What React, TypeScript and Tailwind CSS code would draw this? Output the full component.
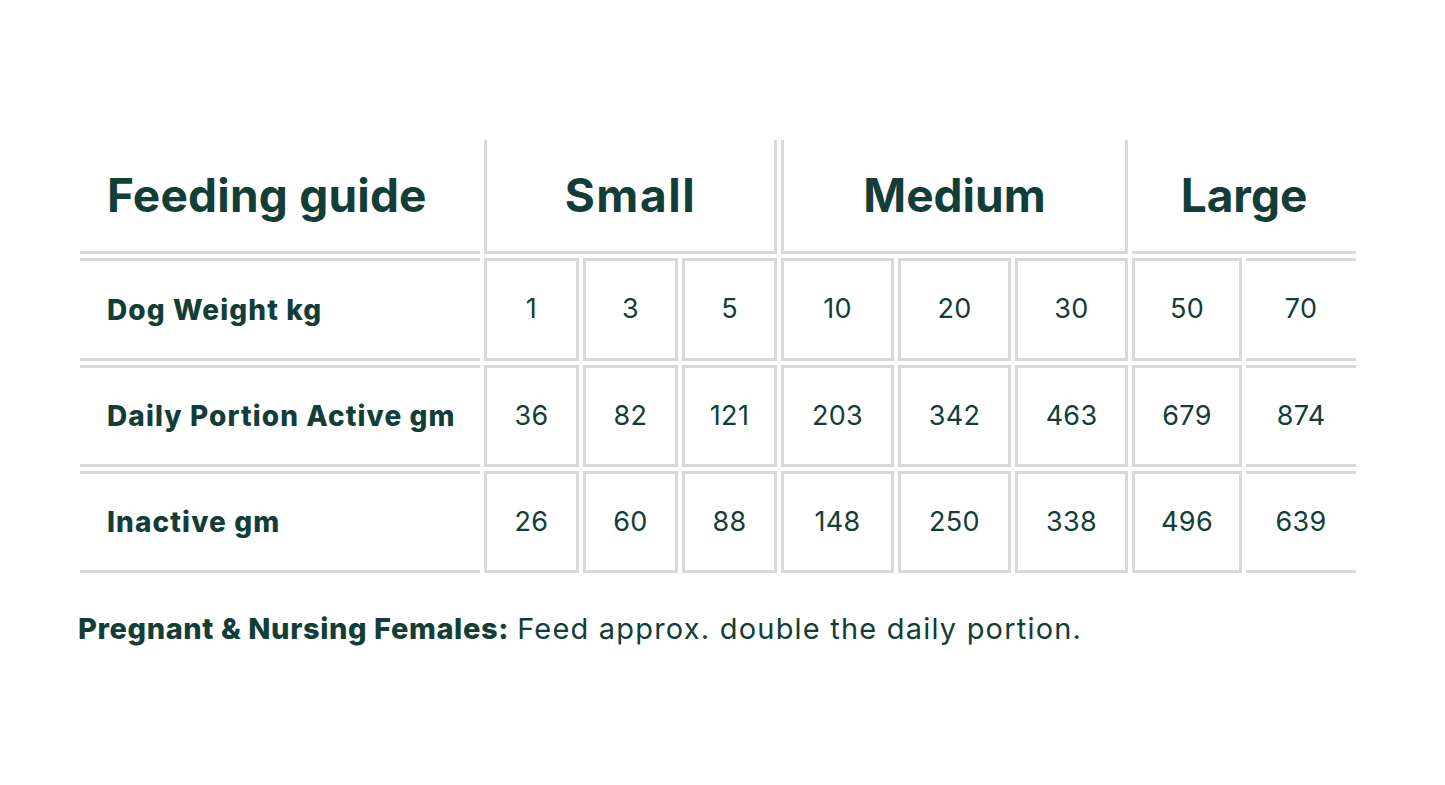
import React from "react";

const C = "text-[#123e37]";
const rows: { label: string; vals: string[] }[] = [
  { label: "Dog Weight kg", vals: ["1", "3", "5", "10", "20", "30", "50", "70"] },
  { label: "Daily Portion Active gm", vals: ["36", "82", "121", "203", "342", "463", "679", "874"] },
  { label: "Inactive gm", vals: ["26", "60", "88", "148", "250", "338", "496", "639"] },
];
const widths = ["w-[95px]", "w-[95px]", "w-[95px]", "w-[113px]", "w-[113px]", "w-[113px]", "w-[110px]", "w-[110px]"];

export default function App() {
  return (
    <div className={`w-[1445px] h-[785px] bg-white ${C}`} style={{ fontFamily: "Inter, 'Liberation Sans', sans-serif" }}>
      <div className="pl-[76px] pt-[136px]">
        <table className="border-separate border-spacing-1 table-fixed w-[1284px]">
          <colgroup>
            <col className="w-[400px]" />
            {widths.map((w, i) => (
              <col key={i} className={w} />
            ))}
          </colgroup>
          <thead>
            <tr>
              <th className="h-[114px] border-b-[3px] border-[#d9d9d9] pl-[27px] text-left text-[46px] font-bold tracking-[0.2px]">
                Feeding guide
              </th>
              <th colSpan={3} className="border-[3px] border-t-0 border-[#d9d9d9] text-center text-[46px] font-bold tracking-[1.6px]">
                Small
              </th>
              <th colSpan={3} className="border-[3px] border-t-0 border-[#d9d9d9] text-center text-[46px] font-bold">
                Medium
              </th>
              <th colSpan={2} className="border-b-[3px] border-[#d9d9d9] text-center text-[46px] font-bold">
                Large
              </th>
            </tr>
          </thead>
          <tbody>
            {rows.map((r, ri) => (
              <tr key={r.label}>
                <td
                  className={
                    ri === 0
                      ? "h-[103px] border-y-[3px] border-[#d9d9d9] pl-[27px] text-left text-[28px] font-extrabold tracking-[1.1px]"
                      : "h-[102px] border-y-[3px] border-[#d9d9d9] pl-[27px] text-left text-[28px] font-extrabold tracking-[1.1px]"
                  }
                >
                  {r.label}
                </td>
                {r.vals.map((v, i) => (
                  <td
                    key={i}
                    className={
                      i === 7
                        ? "border-y-[3px] border-[#d9d9d9] text-center text-[27px] tracking-[0.3px]"
                        : "border-[3px] border-[#d9d9d9] text-center text-[27px] tracking-[0.3px]"
                    }
                  >
                    {v}
                  </td>
                ))}
              </tr>
            ))}
          </tbody>
        </table>
        <p className="mt-[33px] ml-[2px] text-[29px] leading-[38px]">
          <span className="font-extrabold tracking-[0.6px]">Pregnant &amp; Nursing Females:</span>{" "}
          <span className="tracking-[1.2px]">Feed approx. double the daily portion.</span>
        </p>
      </div>
    </div>
  );
}
